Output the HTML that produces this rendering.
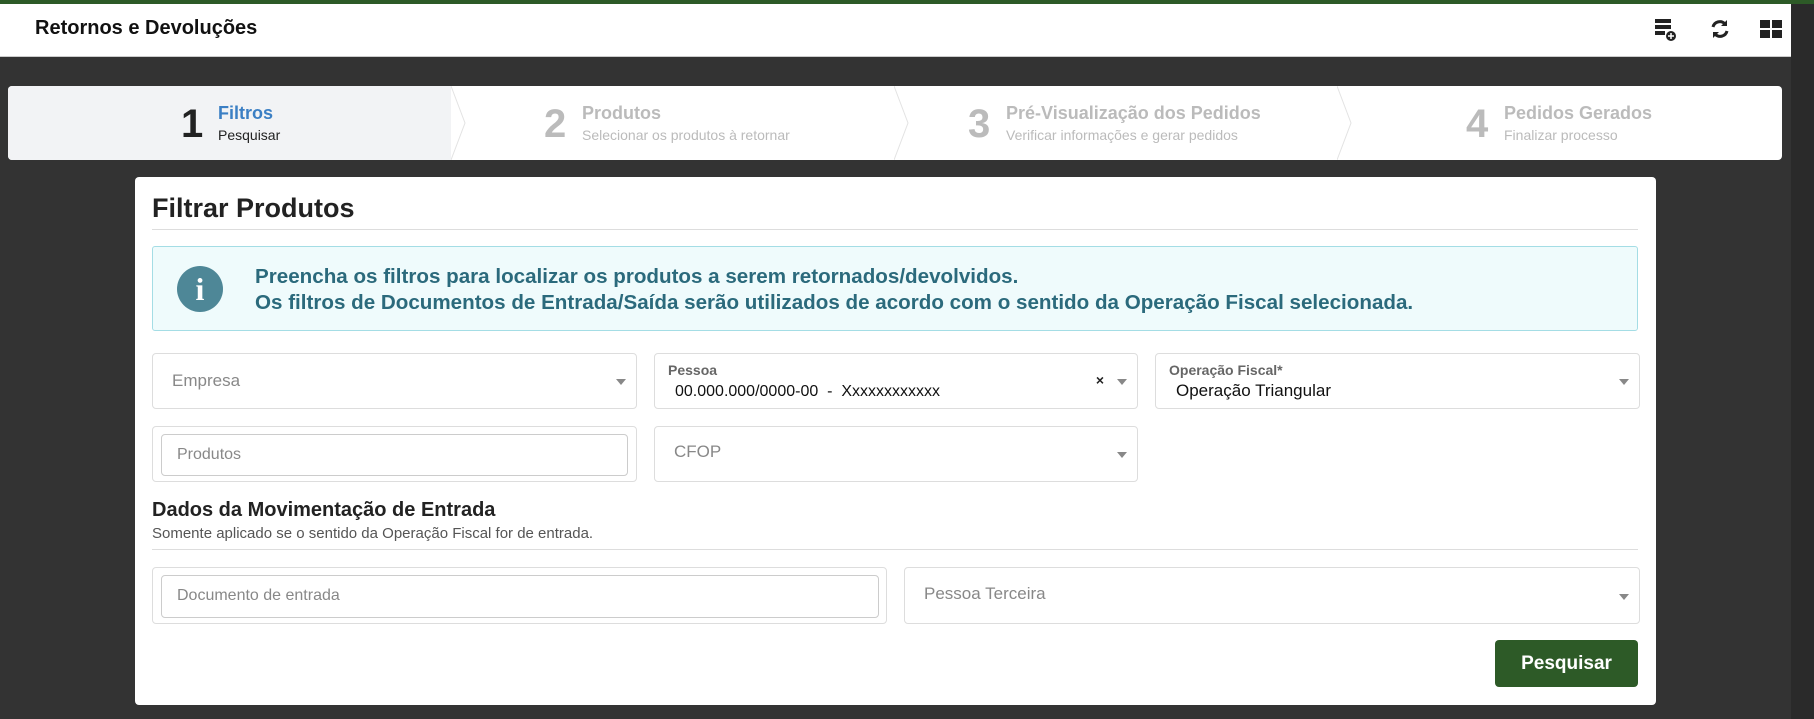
<!DOCTYPE html>
<html><head><meta charset="utf-8"><style>
*{box-sizing:border-box;margin:0;padding:0}
body{width:1814px;height:719px;overflow:hidden;background:#333;font-family:"Liberation Sans",Arial,sans-serif;position:relative}
.abs{position:absolute}
.top{left:0;top:0;width:1814px;height:4px;background:#2d5a27}
.hdr{left:0;top:4px;width:1791px;height:53px;background:#fff;border-bottom:1px solid #ccc}
.scroll{left:1791px;top:4px;width:23px;height:715px;background:#2a2a2a}
.steps{left:8px;top:86px;width:1774px;height:74px;background:#fff;border-radius:4px;overflow:hidden}
.step{position:absolute;top:0;height:74px;width:443px}
.step .n{position:absolute;font-size:40px;font-weight:bold;color:#bbb;top:16px}
.step .t{position:absolute;font-size:18px;font-weight:bold;color:#bbb;top:17px}
.step .s{position:absolute;font-size:14px;color:#bbb;top:41px}
.card{left:135px;top:177px;width:1521px;height:528px;background:#fff;border-radius:4px}
.field{position:absolute;border:1px solid #ddd;border-radius:4px;background:#fff}
.ph{position:absolute;color:#888;font-size:17px}
.arr{position:absolute;right:10px;width:0;height:0;border-left:5px solid transparent;border-right:5px solid transparent;border-top:6px solid #888}
.inp{position:absolute;border:1px solid #ccc;border-radius:4px}
</style></head><body>
<div class="abs top"></div>
<div class="abs hdr">
 <div class="abs" style="left:35px;top:13px;font-size:20px;font-weight:bold;color:#111">Retornos e Devoluções</div>
 <svg class="abs" style="left:1654px;top:14px" width="24" height="24" viewBox="0 0 24 24"><rect x="1" y="1" width="16" height="4" fill="#222"/><rect x="1" y="7" width="16" height="4" fill="#222"/><rect x="1" y="13" width="10" height="4" fill="#222"/><circle cx="17" cy="18" r="5" fill="#222"/><path d="M17 15v6M14 18h6" stroke="#fff" stroke-width="1.5"/></svg>
 <svg class="abs" style="left:1709px;top:14px" width="22" height="22" viewBox="0 0 22 22"><path d="M4 9a7 7 0 0 1 12-3" stroke="#222" stroke-width="3" fill="none"/><path d="M18 2v6h-6z" fill="#222"/><path d="M18 13a7 7 0 0 1-12 3" stroke="#222" stroke-width="3" fill="none"/><path d="M4 20v-6h6z" fill="#222"/></svg>
 <svg class="abs" style="left:1760px;top:16px" width="22" height="18" viewBox="0 0 22 18"><rect x="0" y="0" width="10" height="8" fill="#222"/><rect x="12" y="0" width="10" height="8" fill="#222"/><rect x="0" y="10" width="10" height="8" fill="#222"/><rect x="12" y="10" width="10" height="8" fill="#222"/></svg>
</div>
<div class="abs scroll"></div>
<div class="abs steps">
 <div class="step" style="left:0;background:#f2f3f5"><div class="n" style="left:173px;color:#222">1</div><div class="t" style="left:210px;color:#3b7fc4">Filtros</div><div class="s" style="left:210px;color:#222">Pesquisar</div></div>
 <svg class="abs" style="left:443px;top:0" width="16" height="74"><path d="M0 0L14 37L0 74" stroke="#e3e3e3" fill="none"/></svg>
 <div class="step" style="left:452px"><div class="n" style="left:84px">2</div><div class="t" style="left:122px">Produtos</div><div class="s" style="left:122px">Selecionar os produtos à retornar</div></div>
 <svg class="abs" style="left:886px;top:0" width="16" height="74"><path d="M0 0L14 37L0 74" stroke="#e3e3e3" fill="none"/></svg>
 <div class="step" style="left:895px"><div class="n" style="left:65px">3</div><div class="t" style="left:103px">Pré-Visualização dos Pedidos</div><div class="s" style="left:103px">Verificar informações e gerar pedidos</div></div>
 <svg class="abs" style="left:1329px;top:0" width="16" height="74"><path d="M0 0L14 37L0 74" stroke="#e3e3e3" fill="none"/></svg>
 <div class="step" style="left:1338px"><div class="n" style="left:120px">4</div><div class="t" style="left:158px">Pedidos Gerados</div><div class="s" style="left:158px">Finalizar processo</div></div>
</div>
<div class="abs card">
 <div class="abs" style="left:17px;top:16px;font-size:27px;font-weight:bold;color:#222">Filtrar Produtos</div>
 <div class="abs" style="left:17px;top:52px;width:1486px;height:1px;background:#ddd"></div>
 <div class="abs" style="left:17px;top:69px;width:1486px;height:85px;background:#effbfc;border:1px solid #a4dde5;border-radius:3px">
  <div class="abs" style="left:24px;top:19px;width:46px;height:46px;border-radius:50%;background:#4e8797;color:#fff;font-family:'Liberation Serif',serif;font-weight:bold;font-size:32px;text-align:center;line-height:46px">i</div>
  <div class="abs" style="left:102px;top:17px;font-size:20.6px;font-weight:bold;color:#2b6a7c;line-height:26px">Preencha os filtros para localizar os produtos a serem retornados/devolvidos.<br>Os filtros de Documentos de Entrada/Saída serão utilizados de acordo com o sentido da Operação Fiscal selecionada.</div>
 </div>
 <div class="field" style="left:17px;top:176px;width:485px;height:56px"><div class="ph" style="left:19px;top:17px">Empresa</div><div class="arr" style="top:25px"></div></div>
 <div class="field" style="left:519px;top:176px;width:484px;height:56px"><div class="ph" style="left:13px;top:8px;font-size:14px;font-weight:bold;color:#666">Pessoa</div><div class="abs" style="left:20px;top:29px;font-size:16px;color:#111">00.000.000/0000-00&nbsp; - &nbsp;Xxxxxxxxxxxx</div><div class="abs" style="right:33px;top:18px;font-size:14px;font-weight:bold;color:#222">×</div><div class="arr" style="top:25px"></div></div>
 <div class="field" style="left:1020px;top:176px;width:485px;height:56px"><div class="ph" style="left:13px;top:8px;font-size:14px;font-weight:bold;color:#666">Operação Fiscal*</div><div class="abs" style="left:20px;top:27px;font-size:17px;color:#111">Operação Triangular</div><div class="arr" style="top:25px"></div></div>
 <div class="field" style="left:17px;top:249px;width:485px;height:56px"><div class="inp" style="left:8px;top:7px;width:467px;height:42px"></div><div class="ph" style="left:24px;top:19px;font-size:16px">Produtos</div></div>
 <div class="field" style="left:519px;top:249px;width:484px;height:56px"><div class="ph" style="left:19px;top:15px">CFOP</div><div class="arr" style="top:25px"></div></div>
 <div class="abs" style="left:17px;top:322px;font-size:20px;font-weight:bold;color:#222">Dados da Movimentação de Entrada</div>
 <div class="abs" style="left:17px;top:348px;font-size:15px;color:#555">Somente aplicado se o sentido da Operação Fiscal for de entrada.</div>
 <div class="abs" style="left:17px;top:372px;width:1486px;height:1px;background:#ddd"></div>
 <div class="field" style="left:17px;top:390px;width:735px;height:57px"><div class="inp" style="left:8px;top:7px;width:718px;height:43px"></div><div class="ph" style="left:24px;top:19px;font-size:16px">Documento de entrada</div></div>
 <div class="field" style="left:769px;top:390px;width:736px;height:57px"><div class="ph" style="left:19px;top:16px">Pessoa Terceira</div><div class="arr" style="top:26px"></div></div>
 <div class="abs" style="left:1360px;top:463px;width:143px;height:47px;background:#2d5a27;border-radius:4px;color:#fff;font-size:19px;font-weight:bold;text-align:center;line-height:47px">Pesquisar</div>
</div>
</body></html>
